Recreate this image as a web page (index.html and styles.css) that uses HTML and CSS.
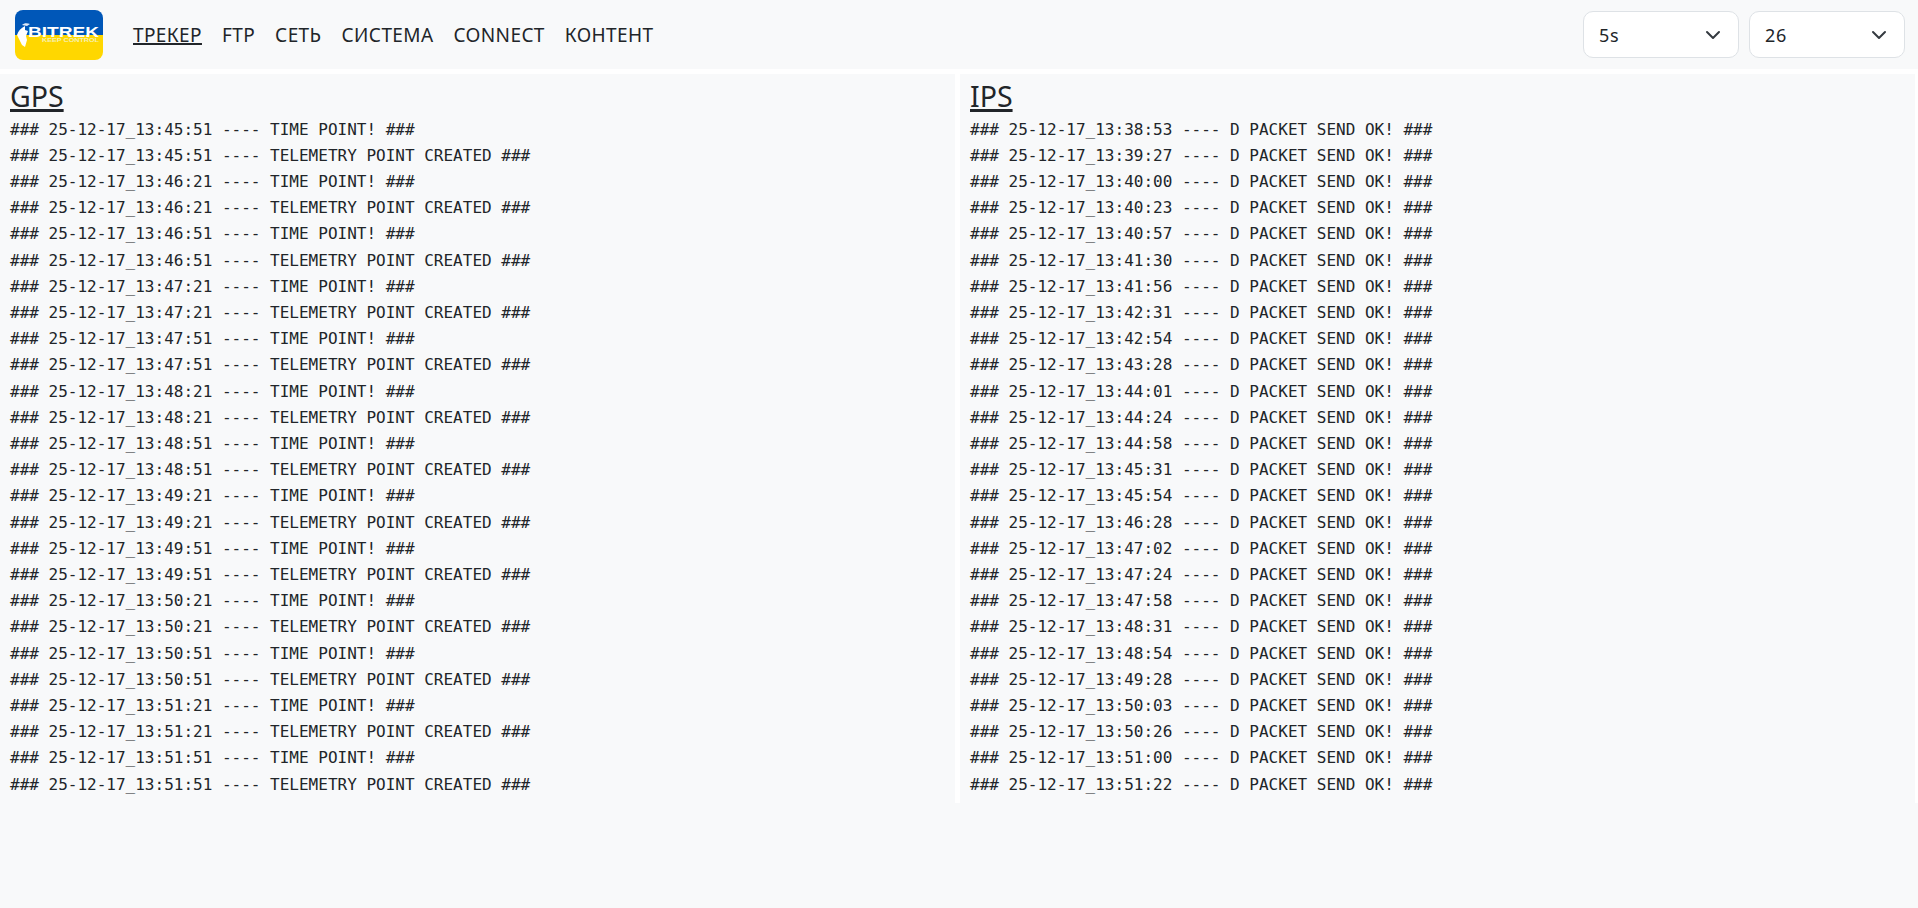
FILE: index.html
```html
<!DOCTYPE html>
<html lang="ru">
<head>
<meta charset="utf-8">
<title>BITREK</title>
<link rel="stylesheet" href="styles.css">
</head>
<body>
<nav class="navbar">
  <svg class="logo" viewBox="0 0 88 50" role="img" aria-label="BITREK">
    <defs><clipPath id="lc"><rect width="88" height="50" rx="8"/></clipPath></defs>
    <g clip-path="url(#lc)">
      <rect width="88" height="25" fill="#0057b8"/>
      <rect y="25" width="88" height="25" fill="#ffd700"/>
      <path d="M2 25 C3 21 6 18 10 16 L10 20 L13 21 L11 26 L12 30 L10 37 L7 35 L4 29 Z" fill="#fff"/>
      <path d="M7 15 C9 13 12 13 15 14 L12 16 Z" fill="#dfe9f5"/>
      <text class="logo-name" x="13" y="27" textLength="71" lengthAdjust="spacingAndGlyphs">BITREK</text>
      <text class="logo-sub" x="27" y="32" textLength="57" lengthAdjust="spacingAndGlyphs">KEEP CONTROL</text>
    </g>
  </svg>
  <ul class="menu">
    <li><a class="active" href="#">ТРЕКЕР</a></li>
    <li><a href="#">FTP</a></li>
    <li><a href="#">СЕТЬ</a></li>
    <li><a href="#">СИСТЕМА</a></li>
    <li><a href="#">CONNECT</a></li>
    <li><a href="#">КОНТЕНТ</a></li>
  </ul>
  <div class="selects">
    <div class="select"><span>5s</span><svg class="chev" viewBox="0 0 16 16"><path d="M2 5l6 6 6-6"/></svg></div>
    <div class="select"><span>26</span><svg class="chev" viewBox="0 0 16 16"><path d="M2 5l6 6 6-6"/></svg></div>
  </div>
</nav>
<main class="panels">
  <section class="panel">
    <h4 class="title">GPS</h4>
    <div class="log">
      <div>### 25-12-17_13:45:51 ---- TIME POINT! ###</div>
      <div>### 25-12-17_13:45:51 ---- TELEMETRY POINT CREATED ###</div>
      <div>### 25-12-17_13:46:21 ---- TIME POINT! ###</div>
      <div>### 25-12-17_13:46:21 ---- TELEMETRY POINT CREATED ###</div>
      <div>### 25-12-17_13:46:51 ---- TIME POINT! ###</div>
      <div>### 25-12-17_13:46:51 ---- TELEMETRY POINT CREATED ###</div>
      <div>### 25-12-17_13:47:21 ---- TIME POINT! ###</div>
      <div>### 25-12-17_13:47:21 ---- TELEMETRY POINT CREATED ###</div>
      <div>### 25-12-17_13:47:51 ---- TIME POINT! ###</div>
      <div>### 25-12-17_13:47:51 ---- TELEMETRY POINT CREATED ###</div>
      <div>### 25-12-17_13:48:21 ---- TIME POINT! ###</div>
      <div>### 25-12-17_13:48:21 ---- TELEMETRY POINT CREATED ###</div>
      <div>### 25-12-17_13:48:51 ---- TIME POINT! ###</div>
      <div>### 25-12-17_13:48:51 ---- TELEMETRY POINT CREATED ###</div>
      <div>### 25-12-17_13:49:21 ---- TIME POINT! ###</div>
      <div>### 25-12-17_13:49:21 ---- TELEMETRY POINT CREATED ###</div>
      <div>### 25-12-17_13:49:51 ---- TIME POINT! ###</div>
      <div>### 25-12-17_13:49:51 ---- TELEMETRY POINT CREATED ###</div>
      <div>### 25-12-17_13:50:21 ---- TIME POINT! ###</div>
      <div>### 25-12-17_13:50:21 ---- TELEMETRY POINT CREATED ###</div>
      <div>### 25-12-17_13:50:51 ---- TIME POINT! ###</div>
      <div>### 25-12-17_13:50:51 ---- TELEMETRY POINT CREATED ###</div>
      <div>### 25-12-17_13:51:21 ---- TIME POINT! ###</div>
      <div>### 25-12-17_13:51:21 ---- TELEMETRY POINT CREATED ###</div>
      <div>### 25-12-17_13:51:51 ---- TIME POINT! ###</div>
      <div>### 25-12-17_13:51:51 ---- TELEMETRY POINT CREATED ###</div>
    </div>
  </section>
  <section class="panel">
    <h4 class="title">IPS</h4>
    <div class="log">
      <div>### 25-12-17_13:38:53 ---- D PACKET SEND OK! ###</div>
      <div>### 25-12-17_13:39:27 ---- D PACKET SEND OK! ###</div>
      <div>### 25-12-17_13:40:00 ---- D PACKET SEND OK! ###</div>
      <div>### 25-12-17_13:40:23 ---- D PACKET SEND OK! ###</div>
      <div>### 25-12-17_13:40:57 ---- D PACKET SEND OK! ###</div>
      <div>### 25-12-17_13:41:30 ---- D PACKET SEND OK! ###</div>
      <div>### 25-12-17_13:41:56 ---- D PACKET SEND OK! ###</div>
      <div>### 25-12-17_13:42:31 ---- D PACKET SEND OK! ###</div>
      <div>### 25-12-17_13:42:54 ---- D PACKET SEND OK! ###</div>
      <div>### 25-12-17_13:43:28 ---- D PACKET SEND OK! ###</div>
      <div>### 25-12-17_13:44:01 ---- D PACKET SEND OK! ###</div>
      <div>### 25-12-17_13:44:24 ---- D PACKET SEND OK! ###</div>
      <div>### 25-12-17_13:44:58 ---- D PACKET SEND OK! ###</div>
      <div>### 25-12-17_13:45:31 ---- D PACKET SEND OK! ###</div>
      <div>### 25-12-17_13:45:54 ---- D PACKET SEND OK! ###</div>
      <div>### 25-12-17_13:46:28 ---- D PACKET SEND OK! ###</div>
      <div>### 25-12-17_13:47:02 ---- D PACKET SEND OK! ###</div>
      <div>### 25-12-17_13:47:24 ---- D PACKET SEND OK! ###</div>
      <div>### 25-12-17_13:47:58 ---- D PACKET SEND OK! ###</div>
      <div>### 25-12-17_13:48:31 ---- D PACKET SEND OK! ###</div>
      <div>### 25-12-17_13:48:54 ---- D PACKET SEND OK! ###</div>
      <div>### 25-12-17_13:49:28 ---- D PACKET SEND OK! ###</div>
      <div>### 25-12-17_13:50:03 ---- D PACKET SEND OK! ###</div>
      <div>### 25-12-17_13:50:26 ---- D PACKET SEND OK! ###</div>
      <div>### 25-12-17_13:51:00 ---- D PACKET SEND OK! ###</div>
      <div>### 25-12-17_13:51:22 ---- D PACKET SEND OK! ###</div>
    </div>
  </section>
</main>
</body>
</html>
```
FILE: styles.css
```css
* { box-sizing: border-box; }
html, body { margin: 0; height: 100%; }
body {
  background: #f8f9fa;
  color: #212529;
  font-family: "Noto Sans", sans-serif;
  overflow: hidden;
}
.navbar {
  display: flex;
  align-items: center;
  height: 69px;
  padding: 0 13px 0 15px;
}
.logo { display: block; width: 88px; height: 50px; }
.logo-name { font-family: "Liberation Sans", sans-serif; font-weight: 700; font-size: 14px; fill: #fff; }
.logo-sub { font-family: "Liberation Sans", sans-serif; font-weight: 700; font-size: 5px; fill: #f6f0b0; }
.menu {
  display: flex;
  gap: 20px;
  list-style: none;
  margin: 0 0 0 30px;
  padding: 0;
  font-size: 19px;
  letter-spacing: 0.4px;
}
.menu a { color: #212529; text-decoration: none; }
.menu a.active { text-decoration: underline; text-decoration-thickness: 2px; }
.selects { display: flex; gap: 10px; margin-left: auto; }
.select {
  display: flex;
  align-items: center;
  justify-content: space-between;
  width: 156px;
  height: 47px;
  padding: 0 17px 0 15px;
  background: #fff;
  border: 1px solid #dee2e6;
  border-radius: 10px;
  font-size: 18px;
  letter-spacing: 0.6px;
}
.chev { width: 16px; height: 16px; fill: none; stroke: #343a40; stroke-width: 2; stroke-linecap: round; stroke-linejoin: round; }
.panels {
  display: grid;
  grid-template-columns: 955px 955px;
  gap: 5px;
  padding: 5px 3px 0 0;
  background: #fff;
  height: 734px;
}
.panel { background: #f8f9fa; padding: 0 10px; height: 729px; }
.title {
  margin: 0;
  font-size: 28.5px;
  font-weight: 400;
  line-height: 34px;
  padding-top: 5px;
  text-decoration: underline;
  text-decoration-thickness: 3px;
}
.log {
  font-family: "DejaVu Sans Mono", monospace;
  font-size: 16px;
  line-height: 26.2px;
  padding-top: 3.5px;
}
```
